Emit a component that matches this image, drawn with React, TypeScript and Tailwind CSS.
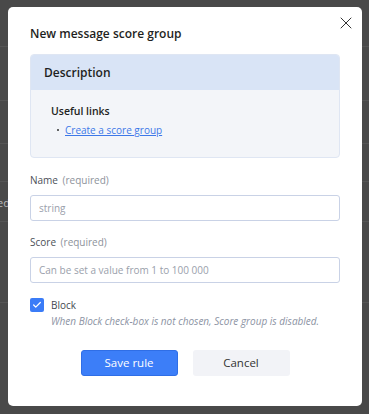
import { Check, X } from "lucide-react";

const labelClass = "text-[10px] leading-[14px] text-[#4b4f57]";
const inputClass =
  "h-[26px] w-full rounded-[3px] border border-[#c9d2e6] bg-white px-[8px] text-[10px] text-[#333] placeholder:text-[#9aa0ab] outline-none";

function BackdropLines() {
  return (
    <div className="absolute inset-0 flex flex-col">
      <div className="h-[47px] border-b border-[#555]" />
      <div className="h-[54px] border-b border-[#555]" />
      <div className="h-[43px] border-b border-[#555]" />
      <div className="h-[38px] border-b border-[#555]" />
      <div className="h-[40px] border-b border-[#555]" />
      <div className="h-[81px] border-b border-[#555]" />
    </div>
  );
}

export default function App() {
  return (
    <div
      className="relative h-[414px] w-[369px] overflow-hidden bg-[#494949]"
      style={{ fontFamily: '"Open Sans", "Noto Sans", sans-serif' }}
    >
      <BackdropLines />
      <span className="absolute left-[-3px] top-[195px] text-[11px] text-[#bbb]">ed</span>

      <div className="relative ml-[8px] mt-[7px] h-[399px] w-[354px] rounded-[5px] bg-white px-[22px] pt-[19px]">
        <button className="absolute right-[6px] top-[6px] text-[#333]">
          <X className="h-[20px] w-[20px]" strokeWidth={1.2} />
        </button>

        <h2 className="text-[12px] font-semibold leading-[16px] text-[#1e1f22]">New message score group</h2>

        <div className="mt-[12px] overflow-hidden rounded-[4px] border border-[#dfe6f3] bg-[#f3f5f9]">
          <div className="flex h-[35px] items-center bg-[#d9e4f6] px-[13px]">
            <p className="text-[12px] font-semibold text-[#1e1f22]">Description</p>
          </div>
          <div className="px-[20px] pb-[18px] pt-[12px]">
            <p className="text-[10.5px] font-semibold leading-[18px] text-[#1e1f22]">Useful links</p>
            <ul className="mt-[1px] flex items-center gap-[6px] pl-[6px]">
              <li className="h-[2px] w-[2px] rounded-full bg-[#333]" />
              <a className="text-[10px] leading-[18px] text-[#3d78e8] underline" href="#">
                Create a score group
              </a>
            </ul>
          </div>
        </div>

        <div className="mt-[15px] flex flex-col gap-[8px]">
          <p className={labelClass}>
            Name <span className="ml-[2px] text-[#8d929b]">(required)</span>
          </p>
          <input className={inputClass} placeholder="string" />
        </div>

        <div className="mt-[14px] flex flex-col gap-[8px]">
          <p className={labelClass}>
            Score <span className="ml-[2px] text-[#8d929b]">(required)</span>
          </p>
          <input className={inputClass} placeholder="Can be set a value from 1 to 100 000" />
        </div>

        <div className="mt-[14px] flex items-start gap-[7px]">
          <span className="mt-[1px] flex h-[14px] w-[14px] items-center justify-center rounded-[2px] bg-[#3b7cf7]">
            <Check className="h-[10px] w-[10px] text-white" strokeWidth={3} />
          </span>
          <div className="flex flex-col">
            <p className="text-[10px] leading-[16px] text-[#45484f]">Block</p>
            <p className="text-[10px] italic leading-[17px] text-[#8c93a3]">
              When Block check-box is not chosen, Score group is disabled.
            </p>
          </div>
        </div>

        <div className="mt-[20px] flex justify-center gap-[15px]">
          <button className="h-[26px] w-[97px] rounded-[3px] border border-[#2f6ee6] bg-[#3c7ef8] text-[11.5px] text-white">
            Save rule
          </button>
          <button className="h-[26px] w-[97px] rounded-[3px] bg-[#f2f3f7] text-[11.5px] text-[#333]">
            Cancel
          </button>
        </div>
      </div>
    </div>
  );
}
